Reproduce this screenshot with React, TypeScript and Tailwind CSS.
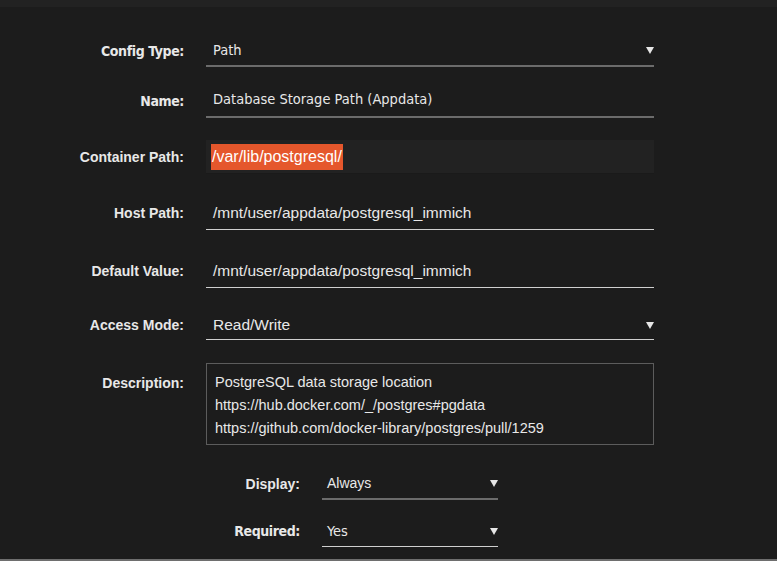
const narrow = "font-['Liberation_Sans_Narrow','DejaVu_Sans_Condensed',sans-serif]";
const wide = "font-['Liberation_Sans',Arial,sans-serif]";

function Arrow() {
  return (
    <svg width="8" height="7" viewBox="0 0 8 7" className="shrink-0">
      <path d="M0 0 H8 L4 7 Z" fill="#e6e6e6" />
    </svg>
  );
}

export default function App() {
  return (
    <div className="w-[777px] h-[561px] bg-[#1c1c1c] text-[#e8e8e8] overflow-hidden flex flex-col">
      <div className="h-[7px] bg-[#222222]" />
      <div className="flex-1 flex flex-col">
        {/* Config Type */}
        <div className="flex items-center mt-[26px]">
          <div className={`w-[184px] text-right font-bold text-[14px] tracking-[-0.4px] ${narrow} pt-[2px]`}>Config Type:</div>
          <div className="ml-[22px] w-[448px] h-[34px] border-b-2 border-[#6b6b6b] flex items-center justify-between pl-[7px] pr-0 pt-[3px]">
            <span className={`text-[14.5px] ${narrow}`}>Path</span>
            <Arrow />
          </div>
        </div>

        {/* Name */}
        <div className="flex items-center mt-[17px]">
          <div className={`w-[184px] text-right font-bold text-[14px] tracking-[-0.4px] ${narrow}`}>Name:</div>
          <div className="ml-[22px] w-[448px] h-[34px] border-b-2 border-[#6b6b6b] flex items-center pl-[7px]">
            <span className={`text-[14.5px] ${narrow}`}>Database Storage Path (Appdata)</span>
          </div>
        </div>

        {/* Container Path */}
        <div className="flex items-center mt-[22px]">
          <div className={`w-[184px] text-right font-bold text-[14px] ${wide}`}>Container Path:</div>
          <div className="ml-[22px] w-[448px] h-[34px] bg-[#222222] border-b border-[#1a1a1a] flex items-center pl-[5px]">
            <span className={`text-[16px] ${wide} bg-[#e5572c] text-white px-[1px] leading-[26px]`}>/var/lib/postgresql/</span>
          </div>
        </div>

        {/* Host Path */}
        <div className="flex items-center mt-[22px]">
          <div className={`w-[184px] text-right font-bold text-[14px] ${wide}`}>Host Path:</div>
          <div className="ml-[22px] w-[448px] h-[34px] border-b border-[#cfcfcf] flex items-center pl-[7px]">
            <span className={`text-[15.5px] ${wide}`}>/mnt/user/appdata/postgresql_immich</span>
          </div>
        </div>

        {/* Default Value */}
        <div className="flex items-center mt-[24px]">
          <div className={`w-[184px] text-right font-bold text-[14px] ${wide}`}>Default Value:</div>
          <div className="ml-[22px] w-[448px] h-[34px] border-b border-[#cfcfcf] flex items-center pl-[7px]">
            <span className={`text-[15.5px] ${wide}`}>/mnt/user/appdata/postgresql_immich</span>
          </div>
        </div>

        {/* Access Mode */}
        <div className="flex items-center mt-[20px]">
          <div className={`w-[184px] text-right font-bold text-[14px] ${wide} pt-[2px]`}>Access Mode:</div>
          <div className="ml-[22px] w-[448px] h-[32px] border-b border-[#cfcfcf] flex items-center justify-between pl-[7px] pr-0 pt-[3px]">
            <span className={`text-[15.5px] ${wide}`}>Read/Write</span>
            <Arrow />
          </div>
        </div>

        {/* Description */}
        <div className="flex items-start mt-[23px]">
          <div className={`w-[184px] text-right font-bold text-[14px] ${wide} mt-[10px]`}>Description:</div>
          <div className={`ml-[22px] w-[448px] h-[82px] border border-[#5c5c5c] pl-[8px] pt-[7px] text-[14.5px] leading-[23px] ${wide}`}>
            <div>PostgreSQL data storage location</div>
            <div>https://hub.docker.com/_/postgres#pgdata</div>
            <div>https://github.com/docker-library/postgres/pull/1259</div>
          </div>
        </div>

        {/* Display */}
        <div className="flex items-center mt-[23px]">
          <div className={`w-[300px] text-right font-bold text-[14px] ${wide}`}>Display:</div>
          <div className="ml-[22px] w-[176px] h-[32px] border-b-2 border-[#6b6b6b] flex items-center justify-between pl-[5px] pr-0">
            <span className={`text-[14px] ${wide}`}>Always</span>
            <Arrow />
          </div>
        </div>

        {/* Required */}
        <div className="flex items-center mt-[15px]">
          <div className={`w-[300px] text-right font-bold text-[14px] tracking-[-0.4px] ${narrow}`}>Required:</div>
          <div className="ml-[22px] w-[176px] h-[32px] border-b border-[#cfcfcf] flex items-center justify-between pl-[5px] pr-0 pt-[2px]">
            <span className={`text-[14.5px] ${narrow}`}>Yes</span>
            <Arrow />
          </div>
        </div>
      </div>
      <div className="h-[2px] bg-[#6e6e6e]" />
    </div>
  );
}
